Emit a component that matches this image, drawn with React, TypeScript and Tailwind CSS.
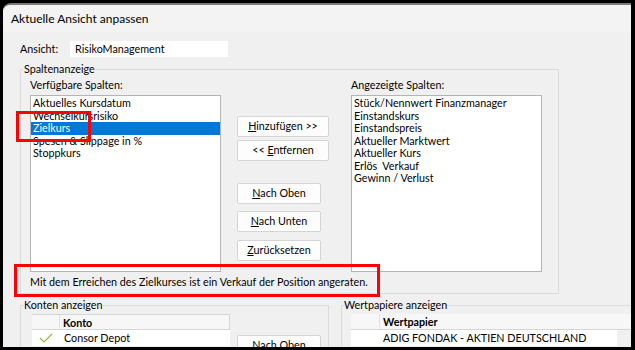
import React from "react"

const available = ["Aktuelles Kursdatum", "Wechselkursrisiko", "Zielkurs", "Spesen & Slippage in %", "Stoppkurs"]
const shown = [
  "Stück/Nennwert Finanzmanager",
  "Einstandskurs",
  "Einstandspreis",
  "Aktueller Marktwert",
  "Aktueller Kurs",
  "Erlös  Verkauf",
  "Gewinn / Verlust",
]

function ListBox({ items, selected }: { items: string[]; selected?: number }) {
  return (
    <div className="w-[191px] h-[177px] bg-white border border-[#b4b4b4] pt-[1px]">
      {items.map((it, i) => (
        <div
          key={it}
          className={`h-[12.5px] leading-[12.5px] px-[2px] whitespace-pre ${i === selected ? "bg-[#0078d7] text-white" : ""}`}
        >
          {it}
        </div>
      ))}
    </div>
  )
}

function Btn({ children, w = "w-[84px]", mt }: { children: React.ReactNode; w?: string; mt: string }) {
  return (
    <div className={`${w} ${mt} h-[21px] bg-[#fdfdfd] border border-[#d4d4d4] rounded-[2px] flex items-center justify-center`}>
      {children}
    </div>
  )
}

export default function App() {
  return (
    <div className="w-[635px] h-[350px] bg-black pt-[3px] pl-[3px] font-['Lato',sans-serif] text-[10.75px] text-black">
      <div className="w-[628px] h-[344px] bg-[#f0f0f0] rounded-tl-[8px] border-t-2 border-[#7a7a7a] overflow-hidden">
        {/* Title */}
        <div className="h-[27px] bg-[#f3f3f3] flex items-center pl-[8px] pt-[1px] text-[12px]">Aktuelle Ansicht anpassen</div>

        {/* Ansicht */}
        <div className="flex items-center mt-[9px] pl-[17px] h-[16px]">
          <span className="w-[50px]">Ansicht:</span>
          <div className="w-[158px] h-[16px] bg-white pl-[5px] leading-[16px]">RisikoManagement</div>
        </div>

        {/* Spaltenanzeige */}
        <fieldset className="ml-[17px] mt-[4px] w-[539px] border border-[#dcdcdc]">
          <legend className="ml-[2px] px-[1px] leading-[16px]">Spaltenanzeige</legend>
          <div className="pl-[9px] pb-[4px]">
            <div className="flex mt-[1px] leading-[14px]">
              <span className="w-[321px]">Verfügbare Spalten:</span>
              <span>Angezeigte Spalten:</span>
            </div>
            <div className="flex mt-[3px]">
              <ListBox items={available} selected={2} />
              <div className="ml-[16px] w-[92px] flex flex-col">
                <Btn w="w-[92px]" mt="mt-[21px]">
                  <span><u>H</u>inzufügen &gt;&gt;</span>
                </Btn>
                <Btn w="w-[92px]" mt="mt-[3px]">
                  <span>&lt;&lt; <u>E</u>ntfernen</span>
                </Btn>
                <Btn mt="mt-[22px]">
                  <span><u>N</u>ach Oben</span>
                </Btn>
                <Btn mt="mt-[7px]">
                  <span><u>N</u>ach Unten</span>
                </Btn>
                <Btn mt="mt-[8px]">
                  <span><u>Z</u>urücksetzen</span>
                </Btn>
              </div>
              <div className="ml-[22px]">
                <ListBox items={shown} />
              </div>
            </div>
            <div className="mt-[3px] leading-[14px]">
              Mit dem Erreichen des Zielkurses ist ein Verkauf der Position angeraten.
            </div>
          </div>
        </fieldset>

        {/* Bottom groups */}
        <div className="flex mt-[3px] ml-[17px]">
          <fieldset className="w-[309px] h-[60px] border border-[#dcdcdc] shrink-0">
            <legend className="ml-[3px] leading-[16px]">Konten anzeigen</legend>
            <div className="flex pl-[11px] mt-[1px]">
              <div className="w-[198px]">
                <div className="flex h-[16px] bg-[#f7f7f7] border-t border-r border-b border-[#d5d5d5]">
                  <div className="w-[28px] border-r border-[#e2e2e2]" />
                  <div className="pl-[3px] font-bold leading-[15px]">Konto</div>
                </div>
                <div className="flex h-[16px] bg-white items-center">
                  <div className="w-[28px] flex justify-center">
                    <svg width="14" height="10" viewBox="0 0 14 10">
                      <path d="M1 5 L5 9 L13 1" fill="none" stroke="#8cbf3f" strokeWidth="1.2" />
                    </svg>
                  </div>
                  <div className="pl-[4px]">Consor Depot</div>
                </div>
              </div>
              <Btn mt="mt-[21px] ml-[7px]">
                <span><u>N</u>ach Oben</span>
              </Btn>
            </div>
          </fieldset>
          <fieldset className="ml-[12px] w-[320px] h-[60px] border border-[#dcdcdc] shrink-0">
            <legend className="ml-[2px] leading-[16px]">Wertpapiere anzeigen</legend>
            <div className="pl-[9px] mt-[1px]">
              <div className="flex h-[16px] bg-[#f7f7f7] border-b border-[#d5d5d5]">
                <div className="w-[29px] border-r border-[#e2e2e2]" />
                <div className="pl-[3px] font-bold leading-[15px]">Wertpapier</div>
              </div>
              <div className="flex h-[16px] w-[266px] bg-white items-center">
                <div className="w-[29px]" />
                <div className="pl-[3px]">ADIG FONDAK - AKTIEN DEUTSCHLAND</div>
              </div>
            </div>
          </fieldset>
        </div>
      </div>

      {/* annotation boxes */}
      <div className="absolute left-[16px] top-[111px] w-[75px] h-[31px] border-[3px] border-[#ff0000]" />
      <div className="absolute left-[14px] top-[264px] w-[366px] h-[33px] border-[3px] border-[#ff0000]" />
    </div>
  )
}
